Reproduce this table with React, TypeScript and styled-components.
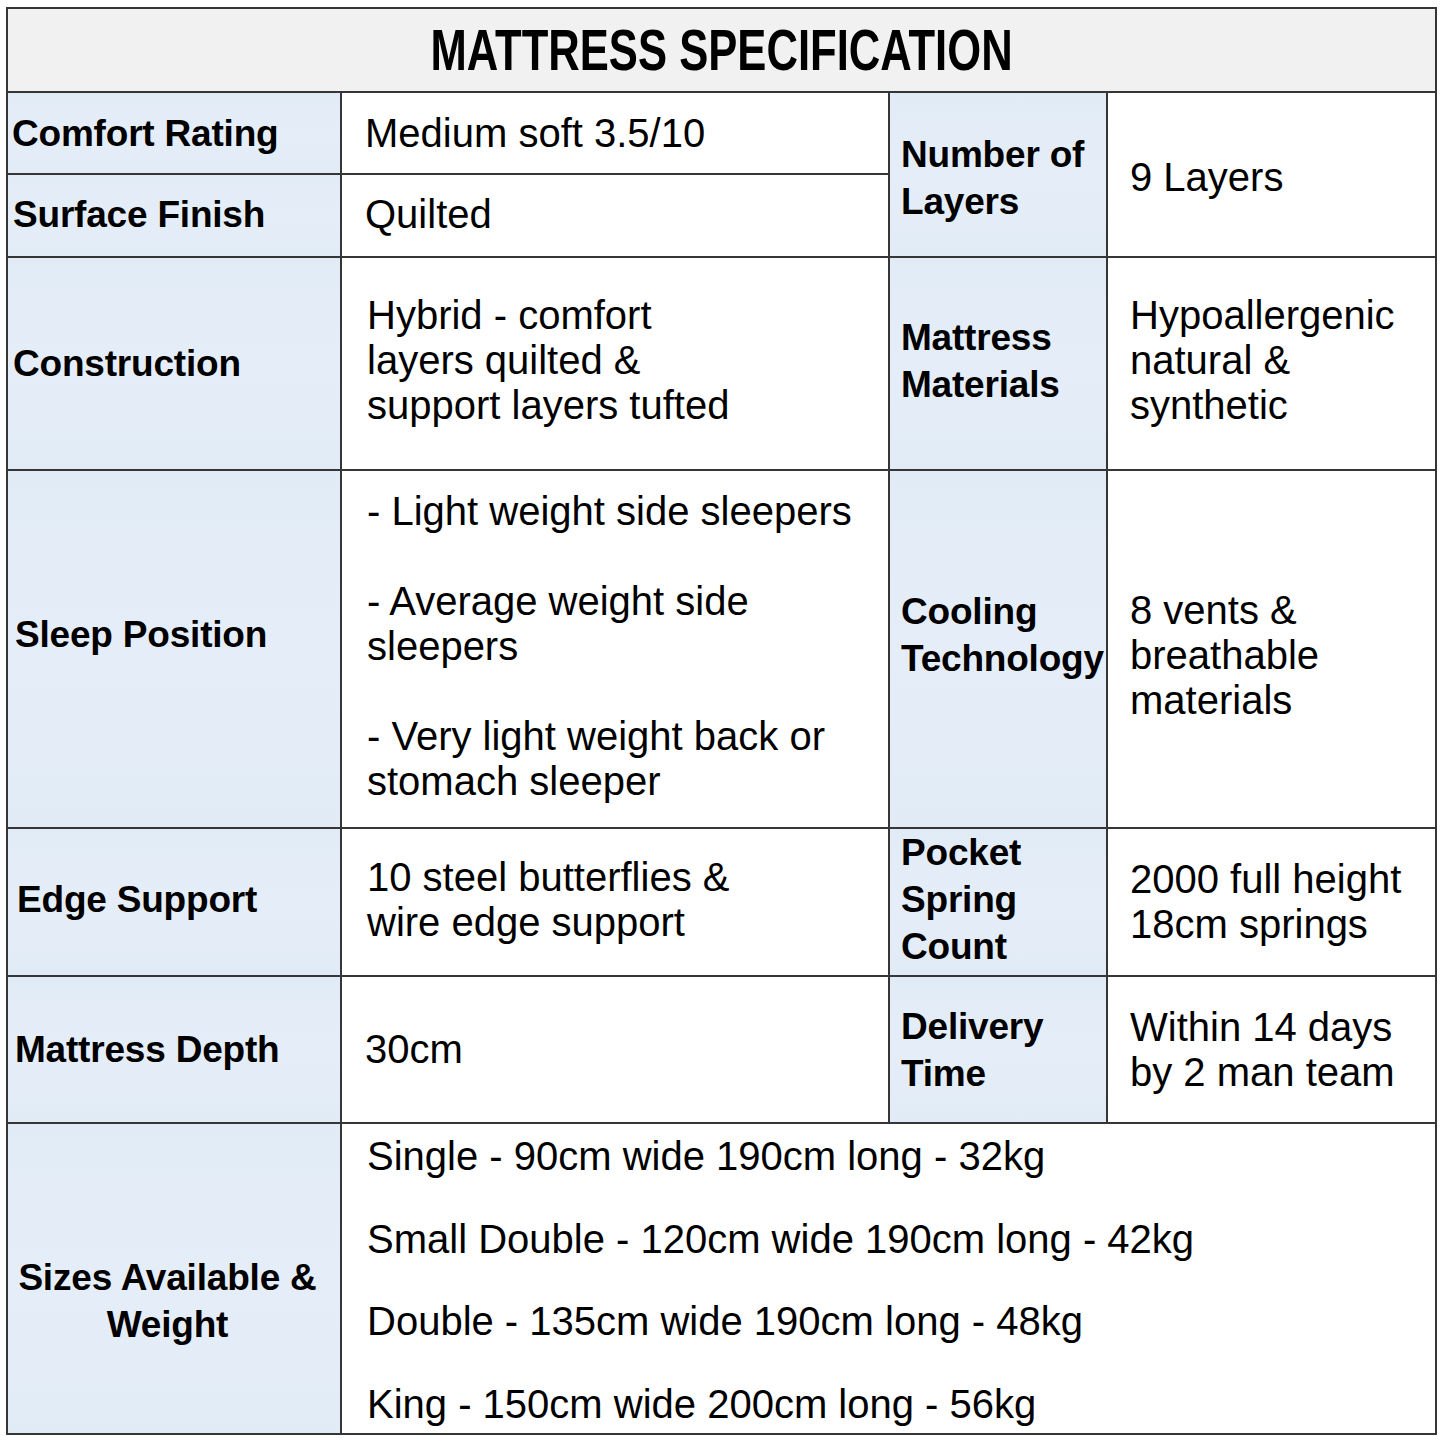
import React from 'react';
import styled, { createGlobalStyle } from 'styled-components';

const GlobalStyle = createGlobalStyle`
  html, body {
    margin: 0;
    padding: 0;
    background: #ffffff;
  }
  body {
    font-family: "Liberation Sans", Arial, sans-serif;
    color: #000;
  }
`;

const Page = styled.div`
  padding: 7px 8px 8px 6px;
`;

const Sheet = styled.div`
  width: 1427px;
  display: grid;
  grid-template-columns: 332px 546px 216px 327px;
  grid-template-rows: 82px 80px 81px 211px 356px 146px 145px 309px;
  gap: 2px;
  border: 2px solid #363636;
  background: #363636;
`;

const Header = styled.div`
  grid-column: 1 / -1;
  background: #f1f1f1;
  display: flex;
  align-items: center;
  justify-content: center;
  overflow: hidden;
`;

const Title = styled.h1`
  margin: 0;
  font-family: "Liberation Sans", Arial, sans-serif;
  font-size: 57px;
  font-weight: 700;
  line-height: 1;
  color: #000;
  transform: scaleX(0.765);
  white-space: nowrap;
`;

const Cell = styled.div<{ $rows?: number; $cols?: number; $nudge?: number }>`
  grid-row: span ${(p) => p.$rows ?? 1};
  grid-column: span ${(p) => p.$cols ?? 1};
  display: flex;
  flex-direction: column;
  justify-content: center;
  padding-top: ${(p) => Math.max(p.$nudge ?? 0, 0)}px;
  padding-bottom: ${(p) => Math.max(-(p.$nudge ?? 0), 0)}px;
  white-space: nowrap;
  overflow: hidden;
`;

const Label = styled(Cell)<{ $indent?: number; $center?: boolean }>`
  background: linear-gradient(180deg, #e1ebf6 0%, #e5eef8 50%, #e1ebf6 100%);
  padding-left: ${(p) => p.$indent ?? 5}px;
  padding-right: ${(p) => (p.$center ? 13 : 0)}px;
  font-size: 37px;
  font-weight: 700;
  line-height: 47px;
  letter-spacing: -0.2px;
  text-align: ${(p) => (p.$center ? 'center' : 'left')};
`;

const Value = styled(Cell)<{ $indent?: number; $gap?: number }>`
  background: #ffffff;
  padding-left: ${(p) => p.$indent ?? 25}px;
  font-size: 40px;
  font-weight: 400;
  line-height: 45px;
  gap: ${(p) => p.$gap ?? 0}px;
`;

const Line = styled.div`
  margin: 0;
`;

const sizes = [
  'Single - 90cm wide 190cm long - 32kg',
  'Small Double - 120cm wide 190cm long - 42kg',
  'Double - 135cm wide 190cm long - 48kg',
  'King - 150cm wide 200cm long - 56kg',
];

const App: React.FC = () => (
  <Page>
    <GlobalStyle />
    <Sheet>
      <Header>
        <Title>MATTRESS SPECIFICATION</Title>
      </Header>

      <Label $indent={4}>Comfort Rating</Label>
      <Value $indent={23}>Medium soft 3.5/10</Value>
      <Label $rows={2} $indent={11} $nudge={6}>
        Number of
        <br />
        Layers
      </Label>
      <Value $rows={2} $indent={22} $nudge={6}>9 Layers</Value>

      <Label $indent={5} $nudge={-3}>Surface Finish</Label>
      <Value $indent={23} $nudge={-3}>Quilted</Value>

      <Label>Construction</Label>
      <Value $nudge={-6}>
        Hybrid - comfort
        <br />
        layers quilted &amp;
        <br />
        support layers tufted
      </Value>
      <Label $indent={11} $nudge={-6}>
        Mattress
        <br />
        Materials
      </Label>
      <Value $indent={22} $nudge={-6}>
        Hypoallergenic
        <br />
        natural &amp;
        <br />
        synthetic
      </Value>

      <Label $indent={7} $nudge={-30}>Sleep Position</Label>
      <Value $gap={45} $nudge={-6}>
        <Line>- Light weight side sleepers</Line>
        <Line>
          - Average weight side
          <br />
          sleepers
        </Line>
        <Line>
          - Very light weight back or
          <br />
          stomach sleeper
        </Line>
      </Value>
      <Label $indent={11} $nudge={-28}>
        Cooling
        <br />
        Technology
      </Label>
      <Value $indent={22} $nudge={12}>
        8 vents &amp;
        <br />
        breathable
        <br />
        materials
      </Value>

      <Label $indent={9} $nudge={-6}>Edge Support</Label>
      <Value $nudge={-4}>
        10 steel butterflies &amp;
        <br />
        wire edge support
      </Value>
      <Label $indent={11} $nudge={-6}>
        Pocket
        <br />
        Spring
        <br />
        Count
      </Label>
      <Value $indent={22}>
        2000 full height
        <br />
        18cm springs
      </Value>

      <Label $indent={7}>Mattress Depth</Label>
      <Value $indent={23}>30cm</Value>
      <Label $indent={11}>
        Delivery
        <br />
        Time
      </Label>
      <Value $indent={22}>
        Within 14 days
        <br />
        by 2 man team
      </Value>

      <Label $center $indent={0} $nudge={44}>
        Sizes Available &amp;
        <br />
        Weight
      </Label>
      <Value $cols={3} $gap={37.5} $nudge={4}>
        {sizes.map((s) => (
          <Line key={s}>{s}</Line>
        ))}
      </Value>
    </Sheet>
  </Page>
);

export default App;
